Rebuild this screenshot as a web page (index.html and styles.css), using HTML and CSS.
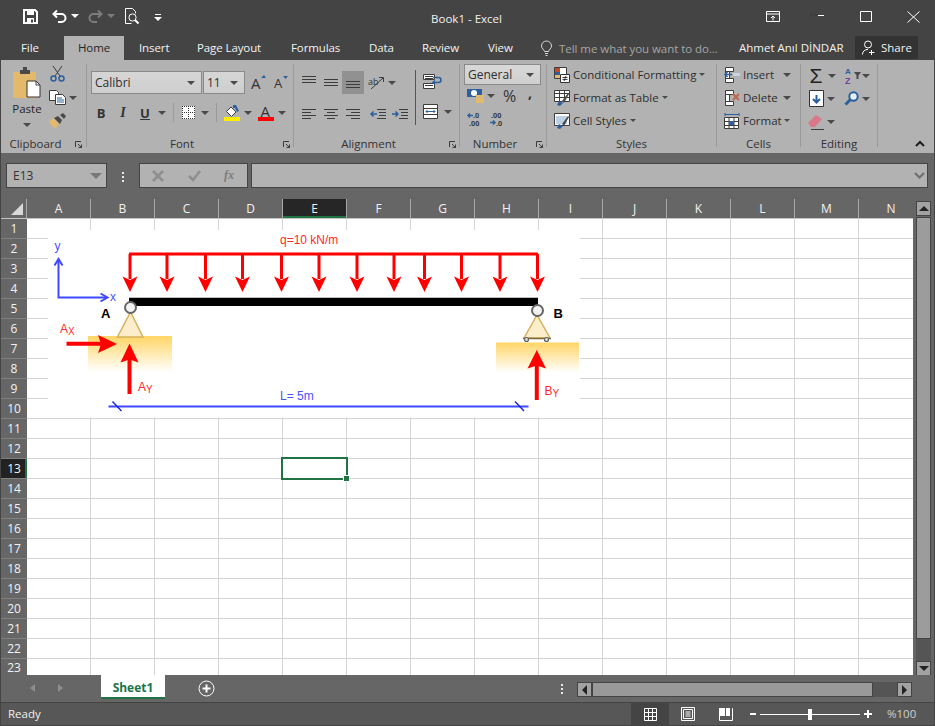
FILE: index.html
```html
<!DOCTYPE html>
<html lang="en">
<head>
<meta charset="utf-8">
<title>Book1 - Excel</title>
<link rel="stylesheet" href="styles.css">
</head>
<body>
<div class="app">

  <header class="titlebar">
    <div class="qat">
      <svg class="q-save" width="15" height="15" viewBox="0 0 15 15"><path class="ln-white2" d="M1 1h11l2 2v11H1z"/><path class="fill-white" d="M4 1h7v5H4zM4 9h7v5H4z"/><path class="fill-dark" d="M8 10.5h2v3H8z"/></svg>
      <svg class="q-undo" width="15" height="14" viewBox="0 0 15 14"><path class="ln-white2" d="M5 1.5 1.5 5 5 8.5M2 5h7.5a3.6 3.6 0 0 1 0 8H6"/></svg>
      <i class="caret caret-white q-c1"></i>
      <svg class="q-redo" width="15" height="14" viewBox="0 0 15 14"><path class="ln-dim2" d="M10 1.5 13.5 5 10 8.5M13 5H5.5a3.6 3.6 0 0 0 0 8H9"/></svg>
      <i class="caret caret-dim q-c2"></i>
      <svg class="q-prev" width="16" height="17" viewBox="0 0 16 17"><path class="ln-white1" d="M1.5 15.5V.5h7l3 3v2M1.5 15.5h6"/><circle class="ln-white1" cx="8.5" cy="9.5" r="3.6"/><path class="ln-white2" d="m11 12 3.5 3.5"/></svg>
      <span class="q-more"><i class="q-bar"></i><i class="caret caret-white"></i></span>
    </div>
    <div class="doc-title">Book1 - Excel</div>
    <div class="win-btns">
      <svg class="w-ribbon" width="14" height="11" viewBox="0 0 14 11"><path class="ln-white1" d="M.5.500h13v10H.5zM.5 3h13M7 9.500V5M5 7l2-2 2 2"/></svg>
      <svg class="w-min" width="16" height="6" viewBox="0 0 16 6"><path class="ln-dark1" d="M1 3h7M3 1 1 3l2 2M6 1l2 2-2 2"/><path class="ln-white1" d="M9 3.500h6"/></svg>
      <svg class="w-max" width="12" height="11" viewBox="0 0 12 11"><path class="ln-white1" d="M.5.500h11v10H.5z"/></svg>
      <svg class="w-close" width="13" height="12" viewBox="0 0 13 12"><path class="ln-white1" d="m.5.500 12 11M12.500.500l-12 11"/></svg>
    </div>
  </header>

  <nav class="tabs">
    <span class="tab tab-file">File</span>
    <span class="tab tab-home">Home</span>
    <span class="tab tab-insert">Insert</span>
    <span class="tab tab-layout">Page Layout</span>
    <span class="tab tab-formulas">Formulas</span>
    <span class="tab tab-data">Data</span>
    <span class="tab tab-review">Review</span>
    <span class="tab tab-view">View</span>
    <svg class="bulb" width="11" height="15" viewBox="0 0 11 15"><path class="ln-grey1" d="M3.500 10.500C3 8.500.5 7.500.5 5a5 5 0 0 1 10 0c0 2.500-2.500 3.500-3 5.500zM4 12.500h3M4.500 14.500h2"/></svg>
    <span class="tell">Tell me what you want to do...</span>
    <span class="user">Ahmet Anıl DİNDAR</span>
    <span class="share">
      <svg width="13" height="15" viewBox="0 0 13 15"><circle class="ln-white1" cx="6" cy="4.500" r="3.500"/><path class="ln-white1" d="M.5 14.500C.5 11 3 9.500 6 9.500M9.500 10v5M7 12.500h5.500"/></svg>
      Share
    </span>
  </nav>

  <section class="ribbon">
    <div class="group g-clip">
      <div class="g-body clip-body">
        <div class="paste">
          <svg width="30" height="31" viewBox="0 0 30 31"><path class="fill-clip" d="M1 5h23v26H1z" /><path class="fill-darkgrey" d="M8 3h3V0h4v3h3v4H8z"/><path class="doc" d="M15 14h9l4 4v12H15z"/><path class="ln-dark1" d="M24 14v4h4"/></svg>
          <span class="paste-label">Paste</span>
          <i class="caret"></i>
        </div>
        <div class="clip-tools">
          <svg width="15" height="16" viewBox="0 0 15 16"><path class="ln-dark1" d="m3 0 7 10M12 0 5 10"/><circle class="ln-blue15" cx="3.500" cy="12.500" r="2.500"/><circle class="ln-blue15" cx="11.500" cy="12.500" r="2.500"/></svg>
          <span class="copy-row">
            <svg width="17" height="15" viewBox="0 0 17 15"><path class="doc-thin" d="M.5.500h7l2 2v8h-9z"/><path class="doc-thin" d="M6.500 4.500h7l3 3v7h-10z"/><path class="ln-blue1" d="M8 8h5M8 10h7M8 12h7"/></svg>
            <i class="caret"></i>
          </span>
          <svg width="17" height="16" viewBox="0 0 17 16"><path class="fill-clip" d="M0 9 4 5l6 6-4 5z"/><path class="fill-darkgrey" d="m5 5 4-2 4 4-2 4zM11 2l3-2 3 3-2 3z"/></svg>
        </div>
      </div>
      <div class="g-label g-label-launch">Clipboard<svg class="launch launch-clip" width="7" height="7" viewBox="0 0 7 7"><path class="ln-dark1" d="M.5 6V.5H6M3 3l3.500 3.500M6.500 3.500v3h-3"/></svg></div>
    </div>

    <div class="group g-font">
      <div class="g-body">
        <div class="font-row1">
          <div class="combo"><span>Calibri</span><i class="caret"></i></div>
          <div class="combo"><span>11</span><i class="caret"></i></div>
          <svg width="15" height="15" viewBox="0 0 15 15"><text class="glyph-a" x="0" y="14">A</text><path class="fill-blue" d="m10 3 3-3 2 3z"/></svg>
          <svg width="14" height="13" viewBox="0 0 14 13"><text class="glyph-a-sm" x="0" y="12">A</text><path class="fill-blue" d="m9 0 5 0-2.500 3z"/></svg>
        </div>
        <div class="font-row2">
          <b class="fmt">B</b>
          <i class="fmt fmt-i">I</i>
          <u class="fmt">U</u>
          <i class="caret"></i>
          <i class="vsep"></i>
          <svg width="13" height="13" viewBox="0 0 13 13"><path class="fill-white" d="M0 0h13v13H0z"/><path class="ln-dot" d="M.5 0v13M6.500 0v13M12.500 0v13M0 .5h13M0 6.500h13M0 12.500h13"/></svg>
          <i class="caret"></i>
          <i class="vsep"></i>
          <svg width="16" height="16" viewBox="0 0 16 16"><path class="doc-thin" d="m7 2 5 5-4.500 4.500-5-5z"/><path class="fill-blue" d="M9 0h3l3 6-2 1-2-4H9z"/><path class="fill-yellow" d="M0 12h16v4H0z"/></svg>
          <i class="caret"></i>
          <svg width="16" height="16" viewBox="0 0 16 16"><text class="glyph-a" x="2.500" y="11.500">A</text><path class="fill-red" d="M0 12h16v4H0z"/></svg>
          <i class="caret"></i>
        </div>
      </div>
      <div class="g-label g-label-launch">Font<svg class="launch" width="7" height="7" viewBox="0 0 7 7"><path class="ln-dark1" d="M.5 6V.5H6M3 3l3.500 3.500M6.500 3.500v3h-3"/></svg></div>
    </div>

    <div class="group g-align">
      <div class="g-body align-body">
        <div class="align-left">
          <div class="align-row1">
            <svg width="14" height="9" viewBox="0 0 14 9"><path class="ln-dark1" d="M0 .5h14M0 3.500h14M0 6.500h14"/></svg>
            <svg width="14" height="9" viewBox="0 0 14 9"><path class="ln-dark1" d="M0 1.500h14M0 4.500h14M0 7.500h14"/></svg>
            <span class="align-on"><svg width="14" height="9" viewBox="0 0 14 9"><path class="ln-dark1" d="M0 .5h14M0 3.500h14M0 6.500h14"/></svg></span>
            <svg width="16" height="15" viewBox="0 0 16 15"><text class="glyph-ab" x="0" y="10">ab</text><path class="ln-dark1" d="M3 14 15 3M11 2.500h4.500V7"/></svg>
            <i class="caret"></i>
          </div>
          <div class="align-row2">
            <svg width="14" height="10" viewBox="0 0 14 10"><path class="ln-dark1" d="M0 .5h14M0 3.500h9M0 6.500h14M0 9.500h9"/></svg>
            <svg width="14" height="10" viewBox="0 0 14 10"><path class="ln-dark1" d="M0 .5h14M3 3.500h8M0 6.500h14M3 9.500h8"/></svg>
            <svg width="14" height="10" viewBox="0 0 14 10"><path class="ln-dark1" d="M0 .5h14M5 3.500h9M0 6.500h14M5 9.500h9"/></svg>
            <svg width="16" height="10" viewBox="0 0 16 10"><path class="ln-dark1" d="M7 .5h9M9 3.500h7M9 6.500h7M7 9.500h9"/><path class="ln-blue15" d="M7 5H1M3.500 2.500 1 5l2.500 2.500"/></svg>
            <svg width="16" height="10" viewBox="0 0 16 10"><path class="ln-dark1" d="M7 .5h9M9 3.500h7M9 6.500h7M7 9.500h9"/><path class="ln-blue15" d="M0 5h6M3.500 2.500 6 5 3.500 7.500"/></svg>
          </div>
        </div>
        <i class="align-sep"></i>
        <div class="align-right">
          <svg class="wrap-icon" width="18" height="15" viewBox="0 0 18 15"><path class="doc-thin" d="M.5.500h11v5H.5zM.5 9.500h11v5H.5z"/><path class="ln-dark1" d="M2 2.500h8M2 4.500h8M2 11.500h8"/><path class="ln-blue15" d="M10 3.500h5.500a2 2 0 0 1 0 5H10M12 6.500 10 8.500l2 2"/></svg>
          <div class="merge-row">
            <svg width="15" height="15" viewBox="0 0 15 15"><path class="doc-thin" d="M.5.500h14v14H.5z"/><path class="ln-dark1" d="M1 4.500h13M1 10.500h13"/><path class="ln-blue1" d="M3 7.500h9M4.500 6 3 7.500 4.500 9M10.500 6 12 7.500 10.500 9"/></svg>
            <i class="caret"></i>
          </div>
        </div>
      </div>
      <div class="g-label g-label-launch">Alignment<svg class="launch" width="7" height="7" viewBox="0 0 7 7"><path class="ln-dark1" d="M.5 6V.5H6M3 3l3.500 3.500M6.500 3.500v3h-3"/></svg></div>
    </div>

    <div class="group g-num">
      <div class="g-body">
        <div class="combo combo-num"><span>General</span><i class="caret"></i></div>
        <div class="num-row2">
          <svg width="17" height="14" viewBox="0 0 17 14"><path class="fill-blue" d="M0 0h15v8H0z"/><circle class="fill-white" cx="7" cy="4" r="3"/><path class="fill-clip" d="M9 6h8v2.500H9zM9 9h8v2.500H9zM9 11.500h8V14H9z"/></svg>
          <i class="caret"></i>
          <span class="pct">%</span>
          <span class="comma">,</span>
        </div>
        <div class="num-row3">
          <svg width="15" height="14" viewBox="0 0 15 14"><text class="glyph-dec" x="6" y="5.500">.0</text><text class="glyph-dec" x="2" y="14">.00</text><path class="ln-blue15" d="M6 3.500H1M3 1.500 1 3.500l2 2"/></svg>
          <svg width="14" height="14" viewBox="0 0 14 14"><text class="glyph-dec" x="1" y="5.500">.00</text><text class="glyph-dec" x="6" y="14">.0</text><path class="ln-blue15" d="M0 10.500h5M3 8.500l2 2-2 2"/></svg>
        </div>
      </div>
      <div class="g-label g-label-launch">Number<svg class="launch" width="7" height="7" viewBox="0 0 7 7"><path class="ln-dark1" d="M.5 6V.5H6M3 3l3.500 3.500M6.500 3.500v3h-3"/></svg></div>
    </div>

    <div class="group g-styles">
      <div class="g-body">
        <div class="cmd">
          <svg width="16" height="16" viewBox="0 0 16 16"><path class="doc-thin" d="M.5.500h12v11H.5z"/><path class="fill-red2" d="M1 1h5v4H1z"/><path class="fill-blue" d="M1 5h5v3H1z"/><path class="fill-clip" d="M1 8h5v3H1z"/><path class="doc-dark" d="M6.500 7.500h9v8h-9z"/><path class="ln-dark1" d="M8.500 10.500h5M8.500 12.500h5M12 9l-2 5"/></svg>
          <span>Conditional Formatting</span><i class="caret"></i>
        </div>
        <div class="cmd">
          <svg width="16" height="16" viewBox="0 0 16 16"><path class="doc-thin" d="M.5.500h15v11H.5z"/><path class="ln-dark1" d="M.5 3.500h15M.5 7.500h15M5.500 1v11M10.500 1v11"/><path class="fill-blue" d="m3 15 2-4 4 2-3 3z"/><path class="fill-darkgrey" d="m8 11 6-8 1 1-5 9z"/></svg>
          <span>Format as Table</span><i class="caret"></i>
        </div>
        <div class="cmd">
          <svg width="16" height="16" viewBox="0 0 16 16"><path class="doc-thin" d="M.5.500h15v12H.5z"/><path class="fill-sky" d="M2 3h11v8H2z"/><path class="fill-blue" d="m3 15 2-4 4 2-3 3z"/><path class="fill-darkgrey" d="m8 11 6-8 1 1-5 9z"/></svg>
          <span>Cell Styles</span><i class="caret"></i>
        </div>
      </div>
      <div class="g-label">Styles</div>
    </div>

    <div class="group g-cells">
      <div class="g-body">
        <div class="cmd cmd-cell">
          <svg width="16" height="16" viewBox="0 0 16 16"><path class="doc-thin" d="M1.500.500h8v4h-8zM1.500 11.500h8v4h-8zM1.500 4.500h4v7h-4z"/><path class="fill-lt" d="M9 6h7v3H9z"/><path class="ln-blue15" d="M8 7.500H1M3.500 5 1 7.500 3.500 10"/></svg>
          <span>Insert</span><i class="caret c-ins"></i>
        </div>
        <div class="cmd cmd-cell">
          <svg width="16" height="16" viewBox="0 0 16 16"><path class="doc-thin" d="M1.500.500h8v4h-8zM1.500 11.500h8v4h-8zM1.500 4.500h4v7h-4z"/><path class="ln-x" d="m9 4 6 6M15 4l-6 6"/></svg>
          <span>Delete</span><i class="caret c-del"></i>
        </div>
        <div class="cmd cmd-cell">
          <svg width="16" height="16" viewBox="0 0 16 16"><path class="ln-blue1" d="M1 1.500h14M1 0v3M15 0v3"/><path class="doc-thin" d="M.5 4.500h14v11H.5z"/><path class="ln-dark1" d="M.5 8.500h14M.5 12.500h14M5 5v10M10 5v10"/><path class="fill-blue" d="M5 8h5v4H5z"/></svg>
          <span>Format</span><i class="caret c-fmt"></i>
        </div>
      </div>
      <div class="g-label">Cells</div>
    </div>

    <div class="group g-edit">
      <div class="g-body">
        <div class="edit-row">
          <span class="sigma">Σ</span>
          <i class="caret"></i>
          <svg width="17" height="17" viewBox="0 0 17 17"><text class="glyph-az" x="1" y="7">A</text><text class="glyph-zz" x="1" y="17">Z</text><path class="fill-darkgrey" d="M10 5h7l-2.500 3.500V12h-2V8.500z"/></svg>
          <i class="caret"></i>
        </div>
        <div class="edit-row edit-row2">
          <svg width="15" height="17" viewBox="0 0 15 17"><path class="doc-dark" d="M.5.500h14v16H.5z"/><path class="ln-blue2" d="M7.500 5v7M4 9l3.500 3.500L11 9"/></svg>
          <i class="caret"></i>
          <svg width="15" height="15" viewBox="0 0 15 15"><circle class="ln-blue2w" cx="9.500" cy="5.500" r="4.200"/><path class="ln-blue3" d="M6.500 8.500 1.500 13.500"/></svg>
          <i class="caret"></i>
        </div>
        <div class="edit-row edit-row3">
          <svg width="16" height="16" viewBox="0 0 16 16"><path class="fill-pink" d="m0 9 8-8 6 4-7 8H3z"/><path class="ln-dark1" d="M3 15.500h13"/></svg>
          <i class="caret"></i>
        </div>
      </div>
      <div class="g-label">Editing</div>
    </div>

    <svg class="collapse" width="10" height="6" viewBox="0 0 10 6"><path class="ln-black2" d="m1 5 4-4 4 4"/></svg>
  </section>

  <section class="formula-row">
    <div class="namebox"><span>E13</span><i class="caret caret-grey"></i></div>
    <div class="dots"><i></i><i></i><i></i></div>
    <div class="fx-box">
      <svg width="12" height="12" viewBox="0 0 12 12"><path class="ln-fx" d="m1 1 10 10M11 1 1 11"/></svg>
      <svg width="13" height="11" viewBox="0 0 13 11"><path class="ln-fx" d="m1 6 4 4 7-9"/></svg>
      <span class="fx">fx</span>
    </div>
    <div class="formula-input"><svg width="11" height="7" viewBox="0 0 11 7"><path class="ln-chev" d="m1 1 4.500 4.500L10 1"/></svg></div>
  </section>

  <section class="sheet-area">
    <div class="sheet-main">
      <div class="col-heads">
        <div class="corner"><i class="corner-tri"></i></div>
        <div class="col">A</div><div class="col">B</div><div class="col">C</div><div class="col">D</div>
        <div class="col col-on">E</div><div class="col">F</div><div class="col">G</div><div class="col">H</div>
        <div class="col">I</div><div class="col">J</div><div class="col">K</div><div class="col">L</div>
        <div class="col">M</div><div class="col">N</div>
      </div>
      <div class="sheet-body">
        <div class="row-heads">
          <div class="rh">1</div><div class="rh">2</div><div class="rh">3</div><div class="rh">4</div>
          <div class="rh">5</div><div class="rh">6</div><div class="rh">7</div><div class="rh">8</div>
          <div class="rh">9</div><div class="rh">10</div><div class="rh">11</div><div class="rh">12</div>
          <div class="rh rh-on">13</div><div class="rh">14</div><div class="rh">15</div><div class="rh">16</div>
          <div class="rh">17</div><div class="rh">18</div><div class="rh">19</div><div class="rh">20</div>
          <div class="rh">21</div><div class="rh">22</div><div class="rh rh-last">23</div>
        </div>
        <div class="cells">
          <svg class="drawing" width="532" height="187" viewBox="48 230 532 187">
            <defs>
              <linearGradient id="soil" x1="0" y1="0" x2="0" y2="1">
                <stop offset="0" stop-color="#ffd566"/>
                <stop offset="1" stop-color="#ffffff"/>
              </linearGradient>
              <g id="load"><path class="d-red3" d="M0 254v25"/><path class="d-redfill" d="M-7.500 276.500 0 280l7.500-3.500L0 292z"/></g>
            </defs>
            <rect x="48" y="230" width="532" height="187" fill="#fff"/>
            <rect x="88" y="336" width="84" height="36" fill="url(#soil)"/>
            <rect x="496" y="342.500" width="83" height="30" fill="url(#soil)"/>

            <text class="d-txt d-red-t" x="280" y="244">q=10 kN/m</text>
            <path class="d-red3" d="M129 254h409"/>
            <use href="#load" x="130"/><use href="#load" x="167"/><use href="#load" x="205.500"/>
            <use href="#load" x="242.500"/><use href="#load" x="281.500"/><use href="#load" x="319"/>
            <use href="#load" x="357"/><use href="#load" x="394"/><use href="#load" x="424.500"/>
            <use href="#load" x="461.500"/><use href="#load" x="500"/><use href="#load" x="537.500"/>

            <path class="d-beam" d="M129 302h409"/>
            <path class="d-beam-top" d="M129 297.500h409"/>

            <path class="d-tri" d="m130.500 312-13 25h25.500z"/>
            <circle class="d-pin" cx="130.500" cy="307.500" r="5.500"/>
            <path class="d-tri" d="m537 315-13 23h26z"/>
            <path class="d-base" d="M523 338.500h28"/>
            <circle class="d-wheel" cx="526.500" cy="339.500" r="2"/>
            <circle class="d-wheel" cx="546.500" cy="339.500" r="2"/>
            <circle class="d-pin" cx="537.500" cy="310.500" r="5.500"/>
            <text class="d-bold" x="101" y="318">A</text>
            <text class="d-bold" x="553.500" y="318">B</text>

            <path class="d-blue2" d="M58.500 260v37.500H106"/>
            <path class="d-blue2" d="M54.500 265.500 58.500 259l4 6.500M100.500 293.500l7 4-7 4"/>
            <text class="d-txt d-blue-t" x="54.500" y="250">y</text>
            <text class="d-txt d-blue-t" x="110" y="301">x</text>

            <path class="d-red4" d="M66.500 343.800h35"/>
            <path class="d-redfill" d="m98 335 19 9-19 9 3-9z"/>
            <text class="d-txt d-red-t" x="60" y="333">A<tspan class="d-sub" dy="2">X</tspan></text>

            <path class="d-red4" d="M129.500 394v-35"/>
            <path class="d-redfill" d="m120.500 362.500 9-19 9 19-9-3z"/>
            <text class="d-txt d-red-t" x="138" y="391">A<tspan class="d-sub" dy="2">Y</tspan></text>

            <path class="d-red4" d="M536.800 400v-35"/>
            <path class="d-redfill" d="m527.500 368.500 9.300-18.500 9.200 18.500-9.200-3z"/>
            <text class="d-txt d-red-t" x="544.500" y="395">B<tspan class="d-sub" dy="2">Y</tspan></text>

            <path class="d-blue2" d="M108.500 406.500h420"/>
            <path class="d-tick" d="m112.500 401.500 9 9.500M515 401.500l9 9.500"/>
            <text class="d-txt d-blue-t" x="280" y="400">L= 5m</text>
          </svg>
          <div class="active-cell"><i class="fill-handle"></i></div>
        </div>
      </div>
    </div>
    <div class="vscroll">
      <div class="sb-btn"><i class="tri-up"></i></div>
      <div class="v-thumb"></div>
      <div class="v-track"></div>
      <div class="sb-btn"><i class="tri-down"></i></div>
    </div>
  </section>

  <section class="sheet-tabs">
    <i class="nav-l"></i>
    <i class="nav-r"></i>
    <div class="sheet-tab">Sheet1</div>
    <svg class="add-sheet" width="17" height="17" viewBox="0 0 17 17"><circle class="ln-white1" cx="8.500" cy="8.500" r="7.500"/><path class="ln-white2" d="M8.500 4.500v8M4.500 8.500h8"/></svg>
    <div class="dots dots-tab"><i></i><i></i><i></i></div>
    <div class="hscroll">
      <div class="sb-btn sb-btn-h"><i class="tri-left"></i></div>
      <div class="h-thumb"></div>
      <div class="h-track"></div>
      <div class="sb-btn sb-btn-h"><i class="tri-right"></i></div>
    </div>
  </section>

  <footer class="status">
    <span class="ready">Ready</span>
    <div class="view-btn view-on"><svg width="13" height="13" viewBox="0 0 13 13"><path class="ln-white1" d="M.5.500h12v12H.5zM4.500 0v13M8.500 0v13M0 4.500h13M0 8.500h13"/></svg></div>
    <div class="view-btn"><svg width="14" height="14" viewBox="0 0 14 14"><path class="ln-white1" d="M.5.500h13v13H.5zM2.500 2.500h9v9h-9zM4.500 5h5M4.500 7h5M4.500 9h5"/></svg></div>
    <div class="view-btn"><svg width="14" height="13" viewBox="0 0 14 13"><path class="fill-white" d="M0 0h6v8H0zM7 0h4v8H7z"/><path class="ln-white1" d="M.5 8v4.500h13V.5H13"/></svg></div>
    <div class="zoom">
      <span class="z-minus"></span>
      <div class="z-track"><i class="z-thumb"></i></div>
      <span class="z-plus"></span>
    </div>
    <span class="zoom-val">%100</span>
  </footer>
</div>
</body>
</html>
```

FILE: styles.css
```css
* { box-sizing: border-box; }
html, body { margin: 0; padding: 0; }
body { width: 935px; height: 726px; overflow: hidden; background: #666; font-family: "Open Sans", "Noto Sans", sans-serif; font-size: 11.5px; }
i { font-style: normal; display: block; }
svg { display: block; flex: none; overflow: visible; }

.app { width: 935px; height: 726px; display: flex; flex-direction: column; border: 1px solid #444; border-width: 0 1px 1px; background: #666; overflow: hidden; }

/* SVG paint helpers */
.ln-white1, .ln-white2, .ln-dim2, .ln-dark1, .ln-grey1, .ln-blue1, .ln-blue15, .ln-blue2, .ln-blue2w, .ln-blue3, .ln-dot, .ln-x, .ln-fx, .ln-chev, .ln-black2 { fill: none; }
.ln-white1 { stroke: #fff; stroke-width: 1; }
.ln-white2 { stroke: #fff; stroke-width: 2; }
.ln-dim2 { stroke: #7c7c7c; stroke-width: 2; }
.ln-dark1 { stroke: #3c3c3c; stroke-width: 1; }
.ln-grey1 { stroke: #d8d8d8; stroke-width: 1; }
.ln-blue1 { stroke: #2b5f9e; stroke-width: 1; }
.ln-blue15 { stroke: #2b5f9e; stroke-width: 1.5; }
.ln-blue2 { stroke: #2b5f9e; stroke-width: 2; }
.ln-blue2w { stroke: #2b5f9e; stroke-width: 2; fill: #e8eef5; }
.ln-blue3 { stroke: #2b5f9e; stroke-width: 3; }
.ln-dot { stroke: #333; stroke-width: 1; stroke-dasharray: 1 1; }
.ln-x { stroke: #c0674a; stroke-width: 2; }
.ln-fx { stroke: #8e8e8e; stroke-width: 2.500; }
.ln-chev { stroke: #6e6e6e; stroke-width: 2; }
.ln-black2 { stroke: #1e1e1e; stroke-width: 2; }
.fill-white { fill: #fff; }
.fill-dark { fill: #444; }
.fill-darkgrey { fill: #4a4a4a; }
.fill-clip { fill: #e3b96b; }
.fill-blue { fill: #2b5f9e; }
.fill-yellow { fill: #ffee00; }
.fill-red { fill: #f00; }
.fill-red2 { fill: #c0492c; }
.fill-sky { fill: #bcd0e6; }
.fill-lt { fill: #c8d4e0; }
.fill-pink { fill: #d8788a; }
.doc { fill: #fff; stroke: #333; stroke-width: 1; }
.doc-thin { fill: #fff; stroke: #3c3c3c; stroke-width: 1; }
.doc-dark { fill: #fff; stroke: #333; stroke-width: 1; }
.glyph-a { font: 15px "Open Sans", sans-serif; fill: #333; }
.glyph-a-sm { font: 13px "Open Sans", sans-serif; fill: #333; }
.glyph-ab { font: 9px "Open Sans", sans-serif; fill: #333; }
.glyph-dec { font: bold 7.500px "Liberation Sans", sans-serif; fill: #333; }
.glyph-az { font: bold 8px "Liberation Sans", sans-serif; fill: #2b5f9e; }
.glyph-zz { font: bold 9px "Liberation Sans", sans-serif; fill: #7a3f9e; }

.caret { width: 0; height: 0; border-left: 4px solid transparent; border-right: 4px solid transparent; border-top: 4px solid #4a4a4a; flex: none; }
.caret-white { border-top-color: #fff; }
.caret-dim { border-top-color: #7c7c7c; }
.caret-grey { border-top-color: #787878; border-left-width: 6px; border-right-width: 6px; border-top-width: 6px; }

/* Title bar */
.titlebar { height: 36px; background: #444; display: flex; position: relative; flex: none; }
.qat { display: flex; align-items: flex-start; padding-left: 22px; width: 300px; }
.q-save { margin-top: 9px; }
.q-undo { margin: 9px 0 0 14px; }
.q-c1 { margin: 14px 0 0 4px; }
.q-redo { margin: 9px 0 0 9px; }
.q-c2 { margin: 14px 0 0 4px; }
.q-prev { margin: 8px 0 0 9px; }
.q-more { margin: 14px 0 0 14px; display: flex; flex-direction: column; gap: 2px; align-items: center; }
.q-bar { width: 6px; height: 1px; background: #fff; }
.doc-title { position: absolute; left: -2px; right: 0; top: 10px; text-align: center; color: #f2f2f2; line-height: 18px; }
.win-btns { margin-left: auto; display: flex; align-items: flex-start; padding-right: 14px; }
.w-ribbon { margin-top: 11px; }
.w-min { margin: 12px 0 0 29px; }
.w-max { margin: 11px 0 0 35px; }
.w-close { margin: 11px 0 0 35px; }

/* Tabs */
.tabs { height: 24px; background: #444; display: flex; align-items: center; position: relative; color: #f2f2f2; flex: none; }
.tab { line-height: 24px; white-space: nowrap; letter-spacing: -.1px; flex: none; }
.tab-file { margin-left: 20px; width: 19px; }
.tab-home { margin-left: 24px; width: 60px; background: #b2b2b2; color: #262626; text-align: center; height: 24px; }
.tab-insert { margin-left: 15px; width: 29px; }
.tab-layout { margin-left: 29px; width: 65px; }
.tab-formulas { margin-left: 29px; width: 49px; }
.tab-data { margin-left: 29px; width: 24px; }
.tab-review { margin-left: 29px; width: 37px; }
.tab-view { margin-left: 29px; width: 25px; }
.bulb { margin-left: 28px; }
.tell { margin-left: 7px; color: #a6a6a6; white-space: nowrap; letter-spacing: -.05px; }
.user { position: absolute; left: 738px; top: 0; line-height: 24px; white-space: nowrap; }
.share { position: absolute; left: 854px; top: 0; width: 63px; height: 23px; background: #333; display: flex; align-items: center; gap: 6px; padding-left: 7px; line-height: 23px; }

/* Ribbon */
.ribbon { height: 93px; background: #b2b2b2; display: flex; padding-top: 4px; color: #262626; flex: none; }
.group { height: 83px; border-right: 1px solid #9a9a9a; flex: none; position: relative; }
.g-clip { width: 86px; }
.g-font { width: 207px; }
.g-align { width: 166px; }
.g-num { width: 87px; }
.g-styles { width: 170px; }
.g-cells { width: 84px; }
.g-edit { width: 77px; }
.g-body { height: 73px; display: flow-root; }
.g-label { position: relative; height: 14px; line-height: 14px; text-align: center; color: #333; white-space: nowrap; }
.g-label-launch { padding-right: 16px; }
.launch { position: absolute; right: 3px; top: 4px; }
.launch-clip { right: 4px; }
.collapse { margin: 77px 0 0 37px; }

.clip-body { display: flex; }
.paste { width: 30px; margin: 3px 0 0 11px; display: flex; flex-direction: column; align-items: center; }
.paste-label { line-height: 16px; margin-top: 3px; }
.paste .caret { margin-top: 6px; }
.clip-tools { margin: 2px 0 0 7px; display: flex; flex-direction: column; gap: 8px; }
.copy-row { display: flex; align-items: center; gap: 3px; }
.clip-tools > svg:first-child { margin-left: 1px; }

.combo { height: 23px; border: 1px solid #8a8a8a; background: linear-gradient(#d6d6d6, #cecece); display: flex; align-items: center; justify-content: space-between; padding: 0 6px 0 3px; line-height: 20px; color: #2e2e2e; font-size: 12px; }
.font-row1 { margin-top: 7px; padding-left: 4px; display: grid; grid-template-columns: 111px 42px 24px 20px; column-gap: 1px; align-items: center; justify-items: center; }
.font-row1 .combo { width: 100%; }
.font-row2 { margin-top: 9px; padding-left: 4px; height: 19px; display: grid; grid-template-columns: 20px 24px 20px 14px 8px 23px 10px 12px 20px 12px 24px 8px; align-items: center; justify-items: center; }
.fmt { font: bold 13px "Open Sans", sans-serif; color: #333; line-height: 18px; }
.fmt-i { font: italic 14px "Liberation Serif", serif; font-weight: bold; }
.vsep { width: 1px; height: 19px; background: #9a9a9a; }

.align-body { display: flex; padding-left: 4px; }
.align-left { width: 113px; }
.align-row1 { margin-top: 7px; height: 23px; display: grid; grid-template-columns: 22px 22px 22px 24px 8px; align-items: center; justify-items: center; }
.align-on { width: 22px; height: 23px; background: #919191; display: flex; align-items: center; justify-content: center; padding-top: 6px; }
.align-row1 > svg:first-child { margin-top: -5px; }
.align-row2 { margin-top: 8px; height: 23px; display: grid; grid-template-columns: 22px 22px 22px 28px 16px; align-items: center; justify-items: center; }
.align-sep { width: 1px; height: 55px; margin: 6px 0 0 4px; background: #555; }
.align-right { margin-left: 7px; }
.wrap-icon { margin-top: 10px; }
.merge-row { margin-top: 15px; display: flex; align-items: center; gap: 6px; }

.g-num .g-body { padding-left: 4px; }
.combo-num { width: 77px; height: 21px; background: linear-gradient(#d8d8d8, #cfcfcf); }
.num-row2 { height: 21px; display: grid; grid-template-columns: 22px 10px 27px 14px; align-items: center; justify-items: center; }
.pct { font-size: 16px; line-height: 20px; color: #333; }
.comma { font-weight: 700; font-size: 14px; line-height: 20px; color: #333; margin-top: -5px; }
.num-row3 { margin-top: 3px; height: 20px; display: grid; grid-template-columns: 20px 26px; align-items: center; justify-items: center; }

.g-styles .g-body, .g-cells .g-body { padding-left: 7px; }
.cmd { height: 23px; display: flex; align-items: center; white-space: nowrap; color: #2e2e2e; }
.cmd:first-child { margin-top: -1px; }
.cmd span { margin-left: 3px; }
.cmd .caret { margin-left: 3px; border-left-width: 3px; border-right-width: 3px; border-top-width: 3px; }
.cmd .c-ins { margin-left: 9px; border-left-width: 4px; border-right-width: 4px; border-top-width: 4px; }
.cmd .c-del { margin-left: 5px; border-left-width: 4px; border-right-width: 4px; border-top-width: 4px; }
.cmd .c-fmt { margin-left: 2px; }

.g-edit .g-body { padding-left: 7px; }
.edit-row { height: 23px; display: grid; grid-template-columns: 16px 16px 24px 4px; align-items: center; justify-items: center; }
.edit-row2 { grid-template-columns: 16px 14px 26px 4px; }
.edit-row3 { grid-template-columns: 16px 14px; }
.sigma { font: 21px/23px "Liberation Sans", sans-serif; color: #222; }

/* Formula row */
.formula-row { height: 46px; background: #666; padding: 10px 6px 0 5px; display: flex; flex: none; align-items: flex-start; }
.namebox { width: 101px; height: 25px; background: #b2b2b2; border: 1px solid #444; display: flex; align-items: center; justify-content: space-between; padding: 0 4px 0 6px; color: #333; font-size: 12px; }
.dots { width: 3px; display: flex; flex-direction: column; gap: 2px; margin: 9px 0 0 15px; }
.dots i { width: 2px; height: 2px; background: #e8e8e8; }
.fx-box { width: 109px; height: 25px; margin-left: 14px; background: #b2b2b2; border: 1px solid #444; display: grid; grid-template-columns: 36px 38px 30px; align-items: center; justify-items: center; }
.fx { font: italic bold 12px "Liberation Serif", serif; color: #7c7c7c; }
.formula-input { width: 678px; height: 25px; margin-left: 3px; background: #b2b2b2; border: 1px solid #444; display: flex; align-items: center; justify-content: flex-end; padding-right: 2px; }

/* Sheet */
.sheet-area { height: 476px; display: flex; flex: none; }
.sheet-main { width: 912px; height: 476px; overflow: hidden; }
.col-heads { height: 20px; display: flex; border-bottom: 1px solid #c4c4c4; }
.corner { width: 26px; flex: none; border-right: 1px solid #a8a8a8; position: relative; }
.corner-tri { position: absolute; left: 10px; top: 4px; width: 0; height: 0; border-left: 12px solid transparent; border-bottom: 12px solid #d8d8d8; }
.col { width: 64px; flex: none; text-align: center; color: #f2f2f2; line-height: 19px; font-size: 12px; border-right: 1px solid #a8a8a8; }
.col:last-child { border-right: 0; }
.col-on { background: #262626; box-shadow: inset 0 -2px 0 #217346; }
.sheet-body { display: flex; height: 456px; }
.row-heads { width: 26px; flex: none; }
.rh { height: 20px; line-height: 19px; text-align: center; color: #f2f2f2; font-size: 12px; background: #666; border-bottom: 1px solid #808080; }
.rh-on { background: #222; box-shadow: inset -2px 0 0 #217346; }
.rh-last { height: 16px; line-height: 17px; border-bottom: 0; }
.cells { position: relative; flex: 1; background-color: #fff;
  background-image: linear-gradient(to right, #d4d4d4 1px, transparent 1px), linear-gradient(to bottom, #d4d4d4 1px, transparent 1px);
  background-size: 64px 20px; background-position: 63px 0, 0 19px; }
.drawing { position: absolute; left: 21px; top: 11px; }
.active-cell { position: absolute; left: 254px; top: 238px; width: 67px; height: 23px; border: 2px solid #217346; }
.fill-handle { position: absolute; right: -4px; bottom: -4px; width: 7px; height: 7px; background: #217346; border: 1px solid #fff; }

.d-txt { font: 12px "Liberation Sans", sans-serif; }
.d-sub { font-size: 10px; }
.d-bold { font: bold 13px "Liberation Sans", sans-serif; fill: #000; }
.d-red-t { fill: #ff2a2a; }
.d-blue-t { fill: #4a50ff; }
.d-red3 { stroke: #f00; stroke-width: 3; fill: none; }
.d-red4 { stroke: #f00; stroke-width: 4; fill: none; }
.d-redfill { fill: #f00; }
.d-beam { stroke: #000; stroke-width: 8; fill: none; }
.d-beam-top { stroke: #bdbdbd; stroke-width: 1; fill: none; }
.d-tri { fill: #fdeecb; stroke: #d4b15c; stroke-width: 1.500; }
.d-pin { fill: #f2f2f2; stroke: #666; stroke-width: 2; }
.d-base { stroke: #7d6b3c; stroke-width: 1.500; fill: none; }
.d-wheel { fill: #ddd; stroke: #666; stroke-width: 1.200; }
.d-blue2 { stroke: #3f48ff; stroke-width: 2; fill: none; }
.d-tick { stroke: #1f2bd6; stroke-width: 1.500; fill: none; }

/* Scrollbars */
.vscroll { width: 21px; padding: 2px 0 0 3px; display: flex; flex-direction: column; flex: none; }
.sb-btn { width: 15px; height: 15px; flex: none; background: #a2a2a2; border: 1px solid #444; display: flex; align-items: center; justify-content: center; }
.v-thumb { width: 15px; height: 422px; margin-top: 1px; background: #9c9c9c; border: 1px solid #444; flex: none; }
.v-track { width: 15px; height: 22px; background: #555; flex: none; }
.tri-up { border-left: 5px solid transparent; border-right: 5px solid transparent; border-bottom: 5px solid #222; }
.tri-down { border-left: 5px solid transparent; border-right: 5px solid transparent; border-top: 5px solid #222; }
.tri-left { border-top: 5px solid transparent; border-bottom: 5px solid transparent; border-right: 5px solid #222; }
.tri-right { border-top: 5px solid transparent; border-bottom: 5px solid transparent; border-left: 5px solid #222; }

/* Sheet tabs */
.sheet-tabs { height: 28px; flex: none; display: flex; align-items: flex-start; background: #666; border-bottom: 1px solid #444; }
.nav-l, .nav-r { width: 0; height: 0; margin-top: 9px; border-top: 4px solid transparent; border-bottom: 4px solid transparent; }
.nav-l { margin-left: 29px; border-right: 5px solid #8e8e8e; }
.nav-r { margin-left: 23px; border-left: 5px solid #8e8e8e; }
.sheet-tab { width: 64px; height: 24px; margin-left: 38px; background: #fff; border-bottom: 2px solid #217346; color: #217346; font-weight: 700; font-size: 12px; text-align: center; line-height: 25px; }
.add-sheet { margin: 5px 0 0 33px; }
.dots-tab { margin: 9px 0 0 346px; }
.hscroll { margin: 7px 0 0 13px; display: flex; width: 335px; }
.sb-btn-h { width: 15px; height: 15px; }
.h-thumb { width: 281px; height: 15px; background: #999; border: 1px solid #444; flex: none; }
.h-track { width: 24px; height: 15px; background: #555; flex: none; }

/* Status */
.status { flex: 1; background: #575757; display: flex; align-items: stretch; color: #f0f0f0; position: relative; }
.ready { width: 32px; margin-left: 7px; line-height: 22px; }
.view-btn { width: 38px; display: flex; align-items: center; justify-content: center; }
.view-on { background: #444; margin-left: 591px; }
.zoom { display: flex; align-items: center; margin-left: 5px; }
.z-minus { width: 6px; height: 2px; background: #fff; }
.z-track { width: 100px; height: 1px; background: #fff; margin-left: 4px; position: relative; }
.z-thumb { position: absolute; left: 48px; top: -5px; width: 4px; height: 11px; background: #fff; }
.z-plus { width: 8px; height: 8px; margin-left: 4px; background: linear-gradient(#fff, #fff) center / 8px 2px no-repeat, linear-gradient(#fff, #fff) center / 2px 8px no-repeat; }
.zoom-val { margin-left: 15px; line-height: 22px; color: #cfcfcf; }
```
